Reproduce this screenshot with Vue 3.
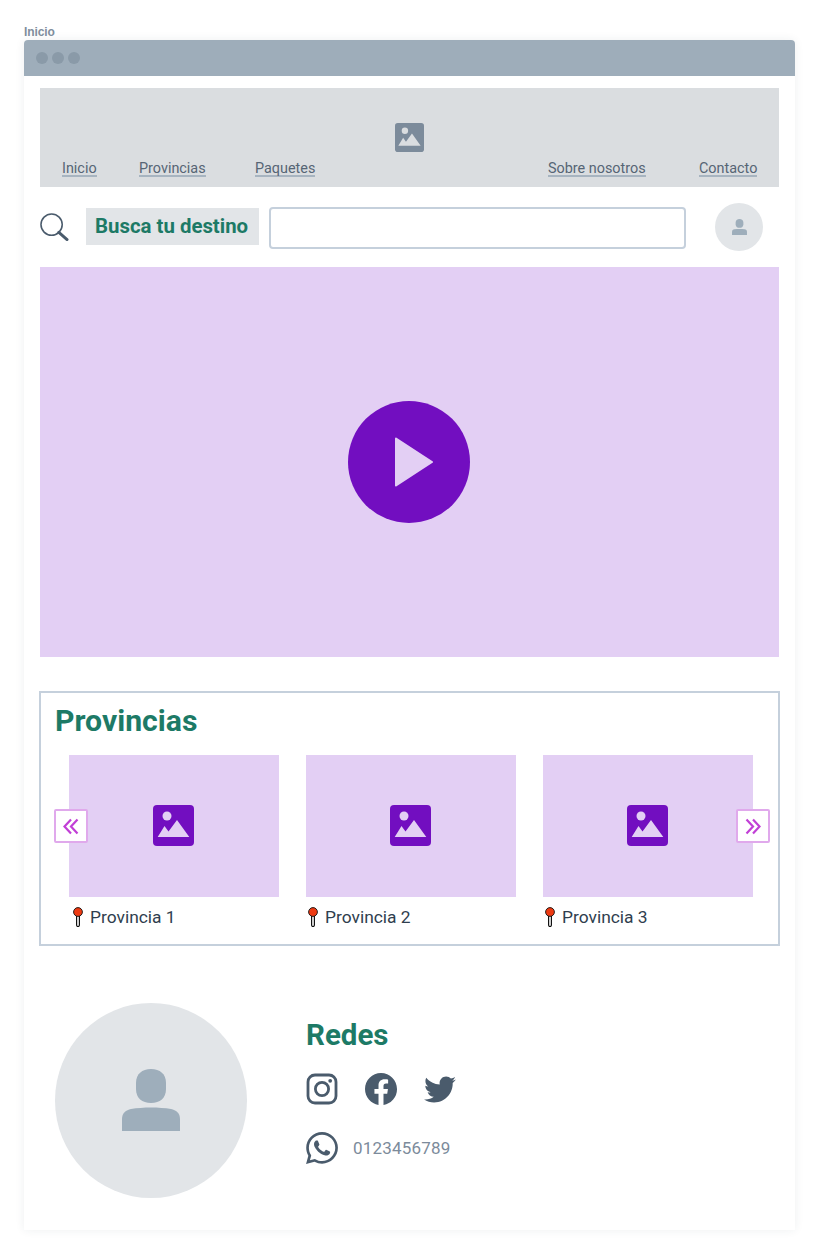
<script setup>
const navLeft = [
  { label: "Inicio", width: 77 },
  { label: "Provincias", width: 116 },
  { label: "Paquetes", width: 60 },
];
const navRight = [
  { label: "Sobre nosotros", width: 151 },
  { label: "Contacto", width: 57 },
];
const provincias = ["Provincia 1", "Provincia 2", "Provincia 3"];
</script>

<template>
  <div class="page">
    <div class="page-title">Inicio</div>
    <div class="browser">
      <div class="browser-bar">
        <span class="dot"></span>
        <span class="dot"></span>
        <span class="dot"></span>
      </div>

      <div class="browser-body">
        <header class="header">
          <nav class="nav nav-left">
            <div v-for="item in navLeft" :key="item.label" class="nav-cell" :style="{ width: item.width + 'px' }">
              <a class="nav-link">{{ item.label }}</a>
            </div>
          </nav>
          <svg class="logo" viewBox="0 0 41 41">
            <rect width="41" height="41" rx="4" fill="#7c8b9b" />
            <circle cx="14" cy="11" r="4.5" fill="#dadde0" />
            <path d="M4.7 32 11.5 21 15.5 26.5 24 15 36.3 32Z" fill="#dadde0" />
          </svg>
          <nav class="nav nav-right">
            <div v-for="item in navRight" :key="item.label" class="nav-cell" :style="{ width: item.width + 'px' }">
              <a class="nav-link">{{ item.label }}</a>
            </div>
          </nav>
        </header>

        <div class="search-row">
          <svg class="search-icon" viewBox="0 0 30 30">
            <circle cx="12" cy="12" r="11" fill="none" stroke="#4a5b6c" stroke-width="1.6" />
            <path d="M19.5 20 28 27.5" fill="none" stroke="#4a5b6c" stroke-width="3" stroke-linecap="round" />
          </svg>
          <div class="search-label">Busca tu destino</div>
          <input class="search-input" type="text" />
          <div class="avatar-small">
            <svg viewBox="0 0 58 62" class="avatar-small-icon">
              <path d="M29 0C38 0 44 5 44 14V20C44 29 38 34 29 34 20 34 14 29 14 20V14C14 5 20 0 29 0Z" fill="#9eaebb" />
              <path d="M0 62V50C0 44 4 41 9 40 21 38 37 38 49 40 54 41 58 44 58 50V62Z" fill="#9eaebb" />
            </svg>
          </div>
        </div>

        <div class="video">
          <div class="play">
            <svg viewBox="0 0 38 50" class="play-icon">
              <path d="M1 1.5 37 25 1 48.5Z" fill="#e3cff4" stroke="#e3cff4" stroke-width="2" stroke-linejoin="round" />
            </svg>
          </div>
        </div>

        <section class="provincias">
          <h2 class="heading">Provincias</h2>
          <div class="carousel">
            <button class="arrow arrow-prev" aria-label="Anterior">
              <svg viewBox="0 0 16 16" class="arrow-icon">
                <path d="M8 1 1.5 8 8 15M14.5 1 8 8 14.5 15" fill="none" stroke="#c13fd6" stroke-width="2.2" />
              </svg>
            </button>
            <div class="cards">
              <div v-for="nombre in provincias" :key="nombre" class="card">
                <div class="card-image">
                  <svg class="card-icon" viewBox="0 0 41 41">
                    <rect width="41" height="41" rx="4" fill="#720ec0" />
                    <circle cx="14" cy="11" r="4.5" fill="#e3cff4" />
                    <path d="M4.7 32 11.5 21 15.5 26.5 24 15 36.3 32Z" fill="#e3cff4" />
                  </svg>
                </div>
                <div class="card-label">
                  <svg class="pin" viewBox="0 0 10 20">
                    <path d="M3.6 9V18C3.6 20 6.4 20 6.4 18V9" fill="#fff" stroke="#111" stroke-width="1.2" />
                    <circle cx="5" cy="5" r="4.4" fill="#ee3a12" stroke="#111" stroke-width="0.9" />
                  </svg>
                  <span>{{ nombre }}</span>
                </div>
              </div>
            </div>
            <button class="arrow arrow-next" aria-label="Siguiente">
              <svg viewBox="0 0 16 16" class="arrow-icon">
                <path d="M8 1 14.5 8 8 15M1.5 1 8 8 1.5 15" fill="none" stroke="#c13fd6" stroke-width="2.2" />
              </svg>
            </button>
          </div>
        </section>

        <footer class="footer">
          <div class="avatar-big">
            <svg viewBox="0 0 58 62" class="avatar-big-icon">
              <path d="M29 0C38 0 44 5 44 14V20C44 29 38 34 29 34 20 34 14 29 14 20V14C14 5 20 0 29 0Z" fill="#9eaebb" />
              <path d="M0 62V50C0 44 4 41 9 40 21 38 37 38 49 40 54 41 58 44 58 50V62Z" fill="#9eaebb" />
            </svg>
          </div>
          <div class="redes">
            <h3 class="redes-title">Redes</h3>
            <div class="redes-icons">
              <svg class="social" viewBox="0 0 32 32">
                <rect x="2" y="2" width="28" height="28" rx="7" fill="none" stroke="#4a5b6c" stroke-width="2.8" />
                <circle cx="16" cy="16" r="6.6" fill="none" stroke="#4a5b6c" stroke-width="2.8" />
                <circle cx="24.2" cy="7.8" r="1.9" fill="#4a5b6c" />
              </svg>
              <svg class="social fb" viewBox="2 2 20 20">
                <path fill="#4a5b6c" d="M12 2.04C6.5 2.04 2 6.53 2 12.06C2 17.06 5.66 21.21 10.44 21.96V14.96H7.9V12.06H10.44V9.85C10.44 7.34 11.93 5.96 14.22 5.96C15.31 5.96 16.45 6.15 16.45 6.15V8.62H15.19C13.95 8.62 13.56 9.39 13.56 10.18V12.06H16.34L15.89 14.96H13.56V21.96A10 10 0 0 0 22 12.06C22 6.53 17.5 2.04 12 2.04Z" />
              </svg>
              <svg class="social tw" viewBox="1.5 4 21 17">
                <path fill="#4a5b6c" d="M22.46,6C21.69,6.35 20.86,6.58 20,6.69C20.88,6.16 21.56,5.32 21.88,4.31C21.05,4.81 20.13,5.16 19.16,5.36C18.37,4.5 17.26,4 16,4C13.65,4 11.73,5.92 11.73,8.29C11.73,8.63 11.77,8.96 11.84,9.27C8.28,9.09 5.11,7.38 3,4.79C2.63,5.42 2.42,6.16 2.42,6.94C2.42,8.43 3.17,9.75 4.33,10.5C3.62,10.5 2.96,10.3 2.38,10C2.38,10 2.38,10 2.38,10.03C2.38,12.11 3.86,13.85 5.82,14.24C5.46,14.34 5.08,14.39 4.69,14.39C4.42,14.39 4.15,14.36 3.89,14.31C4.43,16 6,17.26 7.89,17.29C6.43,18.45 4.58,19.13 2.56,19.13C2.22,19.13 1.88,19.11 1.54,19.07C3.44,20.29 5.7,21 8.12,21C16,21 20.33,14.46 20.33,8.79C20.33,8.6 20.33,8.42 20.32,8.23C21.16,7.63 21.88,6.87 22.46,6Z" />
              </svg>
            </div>
            <div class="phone">
              <svg class="whatsapp" viewBox="2 2 20 20">
                <path fill="#4a5b6c" d="M12.04 2C6.58 2 2.13 6.45 2.13 11.91C2.13 13.66 2.59 15.36 3.45 16.86L2.05 22L7.3 20.62C8.75 21.41 10.38 21.83 12.04 21.83C17.5 21.83 21.95 17.38 21.95 11.92C21.95 9.27 20.92 6.78 19.05 4.91C17.18 3.03 14.69 2 12.04 2M12.05 3.67C14.25 3.67 16.31 4.53 17.87 6.09C19.42 7.65 20.28 9.72 20.28 11.92C20.28 16.46 16.58 20.15 12.04 20.15C10.56 20.15 9.11 19.76 7.85 19L7.55 18.83L4.43 19.65L5.26 16.61L5.06 16.29C4.24 15 3.8 13.47 3.8 11.91C3.81 7.37 7.5 3.67 12.05 3.67M8.53 7.33C8.37 7.33 8.1 7.39 7.87 7.64C7.65 7.89 7 8.5 7 9.71C7 10.93 7.89 12.1 8 12.27C8.14 12.44 9.76 14.94 12.25 16C12.84 16.27 13.3 16.42 13.66 16.53C14.25 16.72 14.79 16.69 15.22 16.63C15.7 16.56 16.68 16.03 16.89 15.45C17.1 14.87 17.1 14.38 17.04 14.27C16.97 14.17 16.81 14.11 16.56 14C16.31 13.86 15.09 13.26 14.87 13.18C14.64 13.1 14.5 13.06 14.31 13.3C14.15 13.55 13.67 14.11 13.53 14.27C13.38 14.44 13.24 14.46 13 14.34C12.74 14.21 11.94 13.95 11 13.11C10.26 12.45 9.77 11.64 9.62 11.39C9.5 11.15 9.61 11 9.73 10.89C9.84 10.78 10 10.6 10.1 10.45C10.23 10.31 10.27 10.2 10.35 10.04C10.43 9.87 10.39 9.73 10.33 9.61C10.27 9.5 9.77 8.26 9.56 7.77C9.36 7.29 9.16 7.35 9 7.34C8.86 7.34 8.7 7.33 8.53 7.33Z" />
              </svg>
              <span class="phone-number">0123456789</span>
            </div>
          </div>
        </footer>
      </div>
    </div>
  </div>
</template>

<style>
body {
  background: #fff;
}
</style>

<style scoped>
.page {
  width: 819px;
  height: 1254px;
  padding: 25px 24px 0;
  box-sizing: border-box;
  font-family: Roboto, "Liberation Sans", sans-serif;
  overflow: hidden;
}

.page-title {
  height: 15px;
  font-family: "Liberation Sans", Arial, sans-serif;
  font-size: 12px;
  font-weight: 700;
  letter-spacing: -0.1px;
  line-height: 15px;
  color: #7f8e9d;
}

.browser {
  width: 771px;
  height: 1190px;
  border-radius: 4px 4px 0 0;
  background: #fff;
  box-shadow: 0 0 10px rgba(40, 60, 80, 0.08);
}

.browser-bar {
  height: 36px;
  padding-left: 12px;
  display: flex;
  align-items: center;
  gap: 4px;
  background: #9eadba;
  border-radius: 4px 4px 0 0;
}

.dot {
  width: 12px;
  height: 12px;
  border-radius: 50%;
  background: #8a9aa8;
}

.browser-body {
  padding: 12px 16px 0;
  display: flex;
  flex-direction: column;
}

.header {
  width: 739px;
  height: 99px;
  background: #dadde0;
  display: grid;
  grid-template-columns: 355px 29px 1fr;
}

.nav {
  display: flex;
  align-items: flex-end;
  padding-bottom: 10px;
}

.nav-left {
  padding-left: 22px;
}

.nav-right {
  justify-content: flex-end;
  padding-right: 23px;
}

.nav-cell {
  flex: none;
}

.nav-link {
  display: inline-block;
  font-size: 14.4px;
  line-height: 12px;
  color: #566575;
  border-bottom: 2px solid #a7b4c0;
  white-space: nowrap;
}

.logo {
  width: 29px;
  height: 29px;
  margin-top: 35px;
}

.search-row {
  display: flex;
  align-items: center;
  height: 48px;
  margin-top: 16px;
}

.search-icon {
  width: 29px;
  height: 29px;
  flex: none;
}

.search-label {
  margin: -1px 0 0 17px;
  width: 173px;
  height: 37px;
  box-sizing: border-box;
  padding-left: 9px;
  background: #e2e5e8;
  color: #1d7a66;
  font-size: 20.4px;
  font-weight: 700;
  line-height: 37px;
  white-space: nowrap;
}

.search-input {
  margin: 1px 0 0 10px;
  width: 417px;
  height: 42px;
  box-sizing: border-box;
  border: 2px solid #c5d0dc;
  border-radius: 4px;
  background: #fff;
  outline: none;
}

.avatar-small {
  margin-left: 29px;
  width: 48px;
  height: 48px;
  border-radius: 50%;
  background: #e2e5e8;
  display: flex;
  align-items: center;
  justify-content: center;
}

.avatar-small-icon {
  width: 15px;
  height: 16px;
}

.video {
  height: 390px;
  margin-top: 16px;
  padding-right: 1px;
  background: #e3cff4;
  display: flex;
  align-items: center;
  justify-content: center;
}

.play {
  width: 122px;
  height: 122px;
  border-radius: 50%;
  background: #720ec0;
  display: flex;
  align-items: center;
  justify-content: center;
}

.play-icon {
  width: 38px;
  height: 50px;
  margin-left: 10px;
}

.provincias {
  margin: 34px 0 0 -1px;
  width: 741px;
  height: 255px;
  box-sizing: border-box;
  border: 2px solid #c5d0dc;
  padding: 0 0 0 14px;
}

.heading {
  margin: 0;
  padding-top: 8px;
  height: 54px;
  box-sizing: border-box;
  font-size: 30.2px;
  font-weight: 700;
  line-height: 40px;
  color: #1d7a66;
}

.carousel {
  position: relative;
  margin-top: 8px;
}

.cards {
  display: grid;
  grid-template-columns: repeat(3, 210px);
  column-gap: 27px;
  padding-left: 14px;
}

.card-image {
  height: 142px;
  background: #e3cff4;
  display: flex;
  align-items: center;
  justify-content: center;
}

.card-icon {
  width: 41px;
  height: 41px;
  margin: -1px 0 0 -1px;
}

.card-label {
  margin-top: 9px;
  display: flex;
  align-items: center;
  gap: 7px;
  font-size: 17.4px;
  line-height: 22px;
  color: #2f3e4e;
  white-space: nowrap;
}

.pin {
  width: 10px;
  height: 20px;
  margin-left: 2px;
  flex: none;
}

.card:first-child .pin {
  margin-left: 4px;
}

.arrow {
  position: absolute;
  top: 54px;
  width: 34px;
  height: 34px;
  padding: 0;
  box-sizing: border-box;
  border: 2px solid #e0a9ec;
  border-radius: 2px;
  background: #fff;
  display: flex;
  align-items: center;
  justify-content: center;
}

.arrow-prev {
  left: -1px;
}

.arrow-next {
  left: 681px;
}

.arrow-icon {
  width: 16px;
  height: 17px;
}

.footer {
  margin-top: 57px;
  display: flex;
  padding-left: 15px;
}

.avatar-big {
  width: 192px;
  height: 195px;
  border-radius: 50%;
  background: #e2e5e8;
  display: flex;
  align-items: center;
  justify-content: center;
  flex: none;
}

.avatar-big-icon {
  width: 58px;
  height: 62px;
  margin-top: -1px;
}

.redes {
  margin-left: 59px;
  padding-top: 14px;
}

.redes-title {
  margin: 0;
  font-size: 29.5px;
  font-weight: 700;
  line-height: 36px;
  color: #1d7a66;
}

.redes-icons {
  display: flex;
  align-items: center;
  margin-top: 20px;
  height: 32px;
}

.social {
  width: 32px;
  height: 32px;
  flex: none;
}

.fb {
  margin-left: 27px;
}

.tw {
  margin-left: 27px;
  height: 27px;
}

.phone {
  display: flex;
  align-items: center;
  margin-top: 27px;
}

.whatsapp {
  width: 32px;
  height: 32px;
  flex: none;
}

.phone-number {
  margin-left: 15px;
  font-size: 17px;
  font-weight: 400;
  letter-spacing: 0.2px;
  color: #7c8b9b;
}
</style>
